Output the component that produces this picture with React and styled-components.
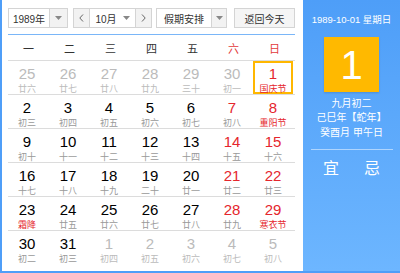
import React from "react";
import styled, { createGlobalStyle } from "styled-components";

/* Calendar
 *
 * Month view of a perpetual calendar with a lunar detail panel on the right.
 */

const GlobalStyle = createGlobalStyle`
  html, body {
    margin: 0;
    padding: 0;
    background: #fff;
  }
  body {
    font-family: "Liberation Sans", "Noto Sans CJK SC", sans-serif;
  }
`;

const WEEKDAYS = ["一", "二", "三", "四", "五", "六", "日"];

// [day, lunar, flags] — o: other month, f: festival / solar term, t: today
const WEEKS = [
  [[25, "廿六", "o"], [26, "廿七", "o"], [27, "廿八", "o"], [28, "廿九", "o"], [29, "三十", "o"], [30, "初一", "o"], [1, "国庆节", "ft"]],
  [[2, "初三"], [3, "初四"], [4, "初五"], [5, "初六"], [6, "初七"], [7, "初八"], [8, "重阳节", "f"]],
  [[9, "初十"], [10, "十一"], [11, "十二"], [12, "十三"], [13, "十四"], [14, "十五"], [15, "十六"]],
  [[16, "十七"], [17, "十八"], [18, "十九"], [19, "二十"], [20, "廿一"], [21, "廿二"], [22, "廿三"]],
  [[23, "霜降", "f"], [24, "廿五"], [25, "廿六"], [26, "廿七"], [27, "廿八"], [28, "廿九"], [29, "寒衣节", "f"]],
  [[30, "初二"], [31, "初三"], [1, "初四", "o"], [2, "初五", "o"], [3, "初六", "o"], [4, "初七", "o"], [5, "初八", "o"]],
];

const Caret = () => (
  <svg width="7" height="4" viewBox="0 0 7 4">
    <path d="M0 0h7L3.5 4z" fill="#888" />
  </svg>
);

const Chevron = ({ right }) => (
  <svg width="5" height="8" viewBox="0 0 5 8">
    <path
      d={right ? "M1 .5L4.2 4 1 7.5" : "M4 .5L.8 4 4 7.5"}
      fill="none"
      stroke="#666"
      strokeWidth="1"
    />
  </svg>
);

const Select = ({ label, width, labelWidth }) => (
  <StyledSelect $w={width}>
    <StyledSelectLabel $w={labelWidth}>{label}</StyledSelectLabel>
    <StyledSelectArrow>
      <Caret />
    </StyledSelectArrow>
  </StyledSelect>
);

const App = () => {
  return (
    <>
      <GlobalStyle />
      <StyledFrame>
        <StyledMain>
          <StyledToolbar>
            <Select label="1989年" width={60} labelWidth={40} />
            <StyledMonthGroup>
              <StyledNavButton>
                <Chevron />
              </StyledNavButton>
              <StyledMonth>
                10月
                <Caret />
              </StyledMonth>
              <StyledNavButton>
                <Chevron right />
              </StyledNavButton>
            </StyledMonthGroup>
            <Select label="假期安排" width={71} labelWidth={54} />
            <StyledTodayButton>返回今天</StyledTodayButton>
          </StyledToolbar>

          <StyledGrid>
            {WEEKDAYS.map((w, i) => (
              <StyledWeekday key={w} $weekend={i >= 5}>
                {w}
              </StyledWeekday>
            ))}
            {WEEKS.map((week, r) =>
              week.map(([day, lunar, flags = ""], i) => (
                <StyledCell key={`${r}-${i}`} $last={r === WEEKS.length - 1}>
                  <StyledDay $today={flags.includes("t")}>
                    <StyledNumber
                      $other={flags.includes("o")}
                      $weekend={i >= 5}
                    >
                      {day}
                    </StyledNumber>
                    <StyledLunar
                      $other={flags.includes("o")}
                      $festival={flags.includes("f")}
                    >
                      {lunar}
                    </StyledLunar>
                  </StyledDay>
                </StyledCell>
              ))
            )}
          </StyledGrid>
        </StyledMain>

        <StyledSide>
          <StyledDate>1989-10-01 星期日</StyledDate>
          <StyledBigDay>1</StyledBigDay>
          <StyledLunarInfo>
            <StyledInfoLine>九月初二</StyledInfoLine>
            <StyledInfoLine>己巳年【蛇年】</StyledInfoLine>
            <StyledInfoLine>癸酉月 甲午日</StyledInfoLine>
          </StyledLunarInfo>
          <StyledDivider />
          <StyledAdvice>
            <span>宜</span>
            <span>忌</span>
          </StyledAdvice>
        </StyledSide>
      </StyledFrame>
    </>
  );
};

const StyledFrame = styled.div`
  display: flex;
  width: 400px;
  height: 273px;
  box-sizing: border-box;
  border-left: 2px solid #4f9ef8;
  border-bottom: 2px solid #4f9ef8;
  overflow: hidden;
`;

const StyledMain = styled.div`
  width: 301px;
  box-sizing: border-box;
  padding: 8px 8px 0 6px;
  background: #fff;
`;

const StyledToolbar = styled.div`
  display: flex;
  align-items: center;
  height: 20px;
  gap: 5px;
  padding-bottom: 6px;
  border-bottom: 1px solid #7ab6f8;
  font-size: 10px;
  color: #333;
`;

const StyledSelect = styled.div`
  display: flex;
  width: ${(p) => p.$w}px;
  height: 20px;
  box-sizing: border-box;
  border: 1px solid #d4d4d4;
`;

const StyledSelectLabel = styled.div`
  width: ${(p) => p.$w}px;
  display: flex;
  align-items: center;
  justify-content: center;
  background: #fff;
  border-right: 1px solid #d4d4d4;
`;

const StyledSelectArrow = styled.div`
  flex: 1;
  display: flex;
  align-items: center;
  justify-content: center;
  background: #f2f2f2;
`;

const StyledMonthGroup = styled.div`
  display: flex;
  width: 79px;
  height: 20px;
  box-sizing: border-box;
  border: 1px solid #d4d4d4;
  margin-right: -1px;
`;

const StyledNavButton = styled.div`
  width: 15px;
  display: flex;
  align-items: center;
  justify-content: center;
  background: #f2f2f2;
`;

const StyledMonth = styled.div`
  flex: 1;
  display: flex;
  align-items: center;
  justify-content: center;
  gap: 6px;
  background: #fff;
  border-left: 1px solid #d4d4d4;
  border-right: 1px solid #d4d4d4;
`;

const StyledTodayButton = styled.div`
  margin-left: auto;
  width: 61px;
  height: 20px;
  box-sizing: border-box;
  display: flex;
  align-items: center;
  justify-content: center;
  border: 1px solid #d4d4d4;
  background: #f5f5f5;
`;

const StyledGrid = styled.div`
  display: grid;
  grid-template-columns: repeat(7, 41px);
`;

const StyledWeekday = styled.div`
  height: 25px;
  display: flex;
  align-items: center;
  justify-content: center;
  border-bottom: 1px solid #dcdcdc;
  font-size: 11px;
  color: ${(p) => (p.$weekend ? "#e23a3a" : "#333")};
`;

const StyledCell = styled.div`
  height: 34px;
  box-sizing: border-box;
  border-bottom: ${(p) => (p.$last ? "none" : "1px solid #dcdcdc")};
`;

const StyledDay = styled.div`
  height: 33px;
  margin: 0 2px 0 -1px;
  box-sizing: border-box;
  display: flex;
  flex-direction: column;
  align-items: center;
  padding-top: 3px;
  border: 2px solid ${(p) => (p.$today ? "#ffb700" : "transparent")};
`;

const StyledNumber = styled.div`
  font-size: 15px;
  line-height: 15px;
  color: ${(p) => (p.$other ? "#bbb" : p.$weekend ? "#e5262d" : "#000")};
`;

const StyledLunar = styled.div`
  margin-top: 3px;
  font-size: 9px;
  line-height: 11px;
  white-space: nowrap;
  color: ${(p) => (p.$festival ? "#e5262d" : p.$other ? "#bbb" : "#999")};
`;

const StyledSide = styled.div`
  flex: 1;
  display: flex;
  flex-direction: column;
  align-items: center;
  background: linear-gradient(#4e9ef8, #6db6ff);
  color: #fff;
`;

const StyledDate = styled.div`
  margin-top: 13px;
  font-size: 9.5px;
  line-height: 13px;
  white-space: nowrap;
`;

const StyledBigDay = styled.div`
  margin-top: 11px;
  width: 55px;
  height: 55px;
  display: flex;
  align-items: center;
  justify-content: center;
  background: #ffb900;
  box-shadow: 0 1px 2px rgba(0, 0, 0, 0.15);
  font-size: 40px;
  line-height: 1;
`;

const StyledLunarInfo = styled.div`
  margin-top: 3px;
  display: flex;
  flex-direction: column;
  align-items: center;
`;

const StyledInfoLine = styled.div`
  height: 14.5px;
  display: flex;
  align-items: center;
  font-size: 10px;
  white-space: nowrap;
`;

const StyledDivider = styled.div`
  width: 82px;
  height: 1px;
  margin-top: 10px;
  background: rgba(255, 255, 255, 0.5);
`;

const StyledAdvice = styled.div`
  margin-top: 9px;
  display: flex;
  gap: 25px;
  font-size: 16px;
  line-height: 20px;
`;

export default App;
